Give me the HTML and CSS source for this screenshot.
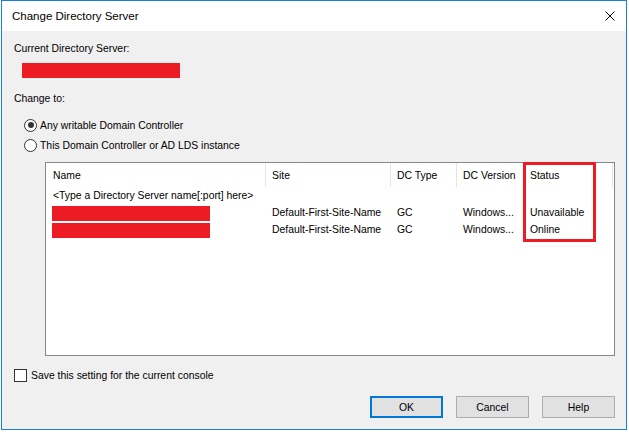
FILE: index.html
```html
<!DOCTYPE html>
<html lang="en">
<head>
    <meta charset="UTF-8">
    <meta name="viewport" content="width=device-width, initial-scale=1.0">
    <title>Change Directory Server</title>
    <link rel="stylesheet" href="styles.css">
</head>
<body>
    <div class="window">
        <div class="titlebar">
            <span class="title">Change Directory Server</span>
            <svg class="close" width="10" height="10" viewBox="0 0 10 10">
                <path d="M0.5 0.5L9.5 9.5M9.5 0.5L0.5 9.5" stroke="#000" stroke-width="1"/>
            </svg>
        </div>

        <div class="content">
            <div class="label current-label">Current Directory Server:</div>
            <div class="redact current-server"></div>

            <div class="label change-label">Change to:</div>
            <div class="radio-group">
                <div class="radio-row"><span class="radio checked"></span>Any writable Domain Controller</div>
                <div class="radio-row"><span class="radio"></span>This Domain Controller or AD LDS instance</div>
            </div>

            <div class="listbox">
                <div class="list-grid">
                    <div class="col-head first">Name</div>
                    <div class="col-head">Site</div>
                    <div class="col-head">DC Type</div>
                    <div class="col-head">DC Version</div>
                    <div class="col-head">Status</div>
                    <div class="col-head last"></div>

                    <div class="cell first wide">&lt;Type a Directory Server name[:port] here&gt;</div>

                    <div class="cell first"><div class="redact row-name"></div></div>
                    <div class="cell">Default-First-Site-Name</div>
                    <div class="cell">GC</div>
                    <div class="cell">Windows...</div>
                    <div class="cell">Unavailable</div>
                    <div class="cell"></div>

                    <div class="cell first"><div class="redact row-name"></div></div>
                    <div class="cell">Default-First-Site-Name</div>
                    <div class="cell">GC</div>
                    <div class="cell">Windows...</div>
                    <div class="cell">Online</div>
                    <div class="cell"></div>
                </div>
                <div class="status-mark"></div>
            </div>

            <div class="check-row"><span class="checkbox"></span>Save this setting for the current console</div>

            <div class="buttons-container">
                <button type="button" class="button default">OK</button>
                <button type="button" class="button">Cancel</button>
                <button type="button" class="button">Help</button>
            </div>
        </div>
    </div>
</body>
</html>
```

FILE: styles.css
```css
* {
    margin: 0;
    padding: 0;
    box-sizing: border-box;
}

body {
    font-family: 'Liberation Sans', Arial, sans-serif;
    font-size: 10.4px;
    color: #000;
    background-color: #fff;
}

.window {
    width: 626px;
    height: 430px;
    margin-left: 1px;
    border: 1px solid #1a7fd6;
    display: flex;
    flex-direction: column;
}

.titlebar {
    height: 30px;
    background-color: #fff;
    display: flex;
    align-items: center;
    justify-content: space-between;
    padding: 0 11px 0 10px;
}

.title {
    font-size: 11.5px;
}

.content {
    flex: 1;
    background-color: #f0f0f0;
    padding: 0 11px 0 12px;
    display: flex;
    flex-direction: column;
}

.label {
    line-height: 14px;
}

.current-label {
    margin-top: 11px;
}

.redact {
    background-color: #ed1c24;
}

.current-server {
    width: 158px;
    height: 15px;
    margin: 7px 0 0 8px;
}

.change-label {
    margin-top: 14px;
}

.radio-group {
    margin-top: 9px;
    margin-left: 10px;
}

.radio-row {
    height: 20px;
    display: flex;
    align-items: center;
    gap: 3px;
}

.radio {
    width: 13px;
    height: 13px;
    border: 1px solid #333;
    border-radius: 50%;
    background-color: #fff;
    display: flex;
    align-items: center;
    justify-content: center;
}

.radio.checked::after {
    content: "";
    width: 6px;
    height: 6px;
    border-radius: 50%;
    background-color: #333;
}

.listbox {
    position: relative;
    width: 570px;
    height: 194px;
    margin: 7px 0 0 31px;
    border: 1px solid #828790;
    background-color: #fff;
}

.list-grid {
    display: grid;
    grid-template-columns: 220px 125px 66px 67px 89px 1fr;
    grid-template-rows: 24px repeat(3, 17px);
}

.col-head {
    display: flex;
    align-items: center;
    padding-left: 6px;
    border-right: 1px solid #e5e5e5;
    white-space: nowrap;
}

.col-head.last {
    border-right: none;
}

.cell {
    line-height: 17px;
    padding-left: 6px;
    white-space: nowrap;
}

.col-head.first,
.cell.first {
    padding-left: 7px;
}

.cell.wide {
    grid-column: 1 / -1;
}

.row-name {
    width: 158px;
    height: 15px;
    margin: 2px 0 0 -1px;
}

.status-mark {
    position: absolute;
    left: 477px;
    top: -1px;
    width: 73px;
    height: 80px;
    border: 3px solid #ed1c24;
}

.check-row {
    margin-top: 13px;
    display: flex;
    align-items: center;
    gap: 4px;
    line-height: 13px;
}

.checkbox {
    width: 13px;
    height: 13px;
    border: 1px solid #333;
    background-color: #fff;
}

.buttons-container {
    display: flex;
    justify-content: flex-end;
    gap: 13px;
    margin-top: 14px;
}

.button {
    width: 73px;
    height: 22px;
    font-family: inherit;
    font-size: 10.4px;
    color: #000;
    background-color: #e1e1e1;
    border: 1px solid #adadad;
}

.button.default {
    border: 2px solid #0078d7;
}
```
